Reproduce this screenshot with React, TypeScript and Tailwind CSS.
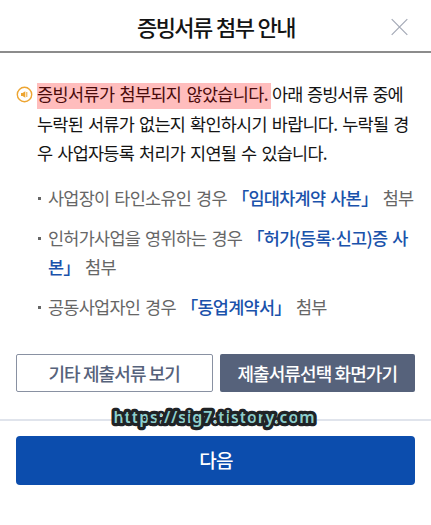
import type { ReactNode } from 'react';

function SpeakerIcon() {
  return (
    <svg className="mt-[7px] block shrink-0" width="17" height="17" viewBox="0 0 17 17" fill="none">
      <circle cx="8.5" cy="8.5" r="7.2" stroke="#eda532" strokeWidth="1.4" />
      <path d="M5 7h1.5L9.3 5.3v6.4L6.5 10H5z" fill="#eda532" />
      <path d="M10.8 6v5" stroke="#eda532" strokeWidth="1" />
    </svg>
  );
}

function Notice({ children }: { children: ReactNode }) {
  return (
    <li className="flex">
      <span className="mt-[14px] mr-[7px] block size-[3px] shrink-0 bg-[#666]" />
      <p className="whitespace-nowrap">{children}</p>
    </li>
  );
}

function Doc({ children }: { children: ReactNode }) {
  return <span className="font-medium text-[#1a52ab]">{children}</span>;
}

export default function App() {
  return (
    <main className="h-[525px] w-[431px] overflow-hidden bg-white font-['Noto_Sans_CJK_KR',sans-serif] text-[#141414]">
      <header className="relative flex h-[53px] items-center justify-center border-b-2 border-[#8c8c8c]">
        <h1 className="pt-px pl-px text-[22px] leading-[30px] font-medium tracking-[-1.6px] [word-spacing:1px]">증빙서류 첨부 안내</h1>
        <button aria-label="닫기" className="absolute top-[18px] right-[23px]">
          <svg className="block" width="17" height="18" viewBox="0 0 17 18" stroke="#a4a9b6" strokeWidth="1.2">
            <path d="M.7 1.2l15.6 15.6M16.3 1.2L.7 16.8" />
          </svg>
        </button>
      </header>

      <section className="h-[366px] px-4 pt-[26px]">
        <div className="flex gap-[3px]">
          <SpeakerIcon />
          <div className="pl-[1px] text-[17.5px] leading-[29.5px] tracking-[-0.75px] whitespace-nowrap [word-spacing:1.8px]">
            <p className="flex h-[29.5px]">
              <mark className="mt-[4px] block h-[26px] w-[234px] bg-[#ffbdbd] text-[#4a0b0b]"><span className="-mt-[4px] block tracking-[-0.63px]">증빙서류가 첨부되지 않았습니다.</span></mark>
              <span className="ml-[1px] tracking-[-0.95px]">아래 증빙서류 중에</span>
            </p>
            <p>누락된 서류가 없는지 확인하시기 바랍니다. 누락될 경</p>
            <p>우 사업자등록 처리가 지연될 수 있습니다.</p>
          </div>
        </div>
        <ul className="mt-[15px] flex flex-col gap-[10.5px] pl-[22px] text-[17.5px] leading-[29.5px] tracking-[-0.75px] text-[#666] [word-spacing:1.8px]">
          <Notice>사업장이 타인소유인 경우 <Doc>「임대차계약 사본」</Doc> 첨부</Notice>
          <Notice>인허가사업을 영위하는 경우 <Doc>「허가(등록<span className="font-['Roboto'] leading-none tracking-normal">·</span>신고)증 사<br />본」</Doc> 첨부</Notice>
          <Notice>공동사업자인 경우 <Doc>「동업계약서」</Doc> 첨부</Notice>
        </ul>
        <div className="mt-[32.5px] flex gap-[7px] text-[18px] font-medium tracking-[-0.9px] [word-spacing:1px]">
          <button className="h-[38px] w-[197px] rounded-[2px] border border-[#8991a2] text-[#56627b]">기타 제출서류 보기</button>
          <button className="h-[38px] w-[196px] rounded-[2px] bg-[#56627b] text-white">제출서류선택 화면가기</button>
        </div>
      </section>

      <footer className="relative border-t-2 border-[#e0e4ec] px-4 pt-[15px]">
        <button className="h-[49px] w-full rounded-[4px] bg-[#0c4dad] pl-px text-[19px] font-medium tracking-[-0.8px] text-white">다음</button>
        <svg className="absolute -top-[18px] left-[104px] overflow-visible" width="220" height="34">
          <text x="9.5" y="19.5" textLength="201" lengthAdjust="spacing" className="fill-[#8dcfcd] stroke-[#202326] stroke-[6.5px] font-['Noto_Sans',sans-serif] text-[16px] font-semibold [paint-order:stroke] [stroke-linejoin:round]">https://sig7.tistory.com</text>
        </svg>
      </footer>
    </main>
  );
}
